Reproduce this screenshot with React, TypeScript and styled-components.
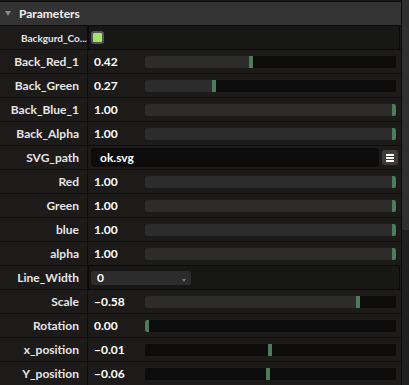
import React from "react";
import styled, { createGlobalStyle } from "styled-components";

const Global = createGlobalStyle`
  html, body { margin: 0; padding: 0; background: #1c1b1a; }
  body { font-family: Lato, "Open Sans", "Liberation Sans", sans-serif; }
`;

const Frame = styled.div`
  display: flex;
  width: 409px;
  height: 385px;
  overflow: hidden;
  background: #1c1b1a;
`;

const Panel = styled.div`
  flex: 1;
  display: flex;
  flex-direction: column;
  padding-top: 1px;
  min-width: 0;
`;

const Header = styled.div`
  height: 23px;
  flex: none;
  display: flex;
  align-items: center;
  gap: 8px;
  padding-left: 5px;
  background: #333333;
  border-top: 1px solid #0c0c0c;
  border-bottom: 1px solid #0c0c0c;
  color: #f2f2f2;
  font-weight: 700;
  font-size: 12px;
`;

const Caret = styled.span`
  width: 0;
  height: 0;
  border-left: 3.5px solid transparent;
  border-right: 3.5px solid transparent;
  border-top: 5px solid #8a8a8a;
`;

const Row = styled.div`
  flex: none;
  display: grid;
  grid-template-columns: 88px 1fr;
  height: 23px;
  border-bottom: 1px solid #0c0c0c;
`;

const Label = styled.div<{ $small?: boolean }>`
  border-right: 1px solid #0c0c0c;
  padding: 0 8px 0 ${(p) => (p.$small ? "21px" : "8px")};
  display: flex;
  align-items: center;
  justify-content: ${(p) => (p.$small ? "flex-start" : "flex-end")};
  color: #e6e6e6;
  font-weight: 700;
  font-size: ${(p) => (p.$small ? "10px" : "12px")};
  white-space: nowrap;
  overflow: hidden;
`;

const Cell = styled.div<{ $boxed?: boolean }>`
  display: flex;
  align-items: center;
  padding: 0 5px 0 3px;
  min-width: 0;
  ${(p) =>
    p.$boxed &&
    `background:#171716; border:1px solid #0a0a0a; border-top:none; border-bottom:none; margin-right:1px; padding-left:2px;`}
`;

const Value = styled.span`
  width: 51px;
  flex: none;
  padding-left: 3px;
  color: #ffffff;
  font-weight: 700;
  font-size: 12px;
`;

const Track = styled.div`
  position: relative;
  flex: 1;
  height: 12px;
  background: #0c0c0c;
  border-radius: 2px;
  overflow: hidden;
`;

const Fill = styled.div`
  position: absolute;
  top: 0;
  bottom: 0;
  background: #2c2c2c;
`;

const Handle = styled.div`
  position: absolute;
  top: 0;
  bottom: 0;
  width: 4px;
  background: #4d7a58;
`;

const Swatch = styled.div<{ $color: string }>`
  width: 9px;
  height: 9px;
  border: 2px solid #555555;
  border-radius: 3px;
  background: ${(p) => p.$color};
`;

const TextBox = styled.div`
  flex: 1;
  height: 19px;
  display: flex;
  align-items: center;
  padding-left: 9px;
  background: #0c0c0c;
  border-radius: 3px;
  color: #ffffff;
  font-weight: 700;
  font-size: 12px;
`;

const MenuButton = styled.div`
  width: 16px;
  height: 15px;
  margin-left: 3px;
  margin-right: -2px;
  display: flex;
  flex-direction: column;
  align-items: center;
  justify-content: center;
  gap: 1px;
  background: #3c3c3c;
  border-radius: 3px;
`;

const Bar = styled.span`
  width: 8px;
  height: 2px;
  background: #ffffff;
`;

const Select = styled.div`
  position: relative;
  width: 100px;
  height: 14px;
  display: flex;
  align-items: center;
  padding-left: 6px;
  box-sizing: border-box;
  background: #2c2c2c;
  border-radius: 3px;
  color: #ffffff;
  font-weight: 700;
  font-size: 12px;
`;

const SelectCaret = styled.span`
  position: absolute;
  right: 5px;
  top: 8px;
  width: 0;
  height: 0;
  border-left: 2px solid transparent;
  border-right: 2px solid transparent;
  border-top: 3px solid #7a7a7a;
`;

const Scrollbar = styled.div`
  width: 7px;
  flex: none;
  border-left: 1px solid #0c0c0c;
  background: #1f1f1f;
  display: flex;
  flex-direction: column;
`;

const Thumb = styled.div`
  height: 230px;
  background: #2f2f2f;
`;

type SliderRow = {
  kind: "slider";
  label: string;
  value: string;
  pos: number;
  bipolar?: boolean;
};
type RowDef =
  | SliderRow
  | { kind: "color"; label: string; color: string }
  | { kind: "text"; label: string; value: string }
  | { kind: "select"; label: string; value: string };

const rows: RowDef[] = [
  { kind: "color", label: "Backgurd_Co...", color: "#a2e468" },
  { kind: "slider", label: "Back_Red_1", value: "0.42", pos: 0.42 },
  { kind: "slider", label: "Back_Green", value: "0.27", pos: 0.27 },
  { kind: "slider", label: "Back_Blue_1", value: "1.00", pos: 1 },
  { kind: "slider", label: "Back_Alpha", value: "1.00", pos: 1 },
  { kind: "text", label: "SVG_path", value: "ok.svg" },
  { kind: "slider", label: "Red", value: "1.00", pos: 1 },
  { kind: "slider", label: "Green", value: "1.00", pos: 1 },
  { kind: "slider", label: "blue", value: "1.00", pos: 1 },
  { kind: "slider", label: "alpha", value: "1.00", pos: 1 },
  { kind: "select", label: "Line_Width", value: "0" },
  { kind: "slider", label: "Scale", value: "\u22120.58", pos: 0.855 },
  { kind: "slider", label: "Rotation", value: "0.00", pos: 0 },
  { kind: "slider", label: "x_position", value: "\u22120.01", pos: 0.498, bipolar: true },
  { kind: "slider", label: "Y_position", value: "\u22120.06", pos: 0.49, bipolar: true },
];

function Slider({ pos, bipolar }: { pos: number; bipolar?: boolean }) {
  const start = bipolar ? Math.min(pos, 0.5) : 0;
  const end = bipolar ? Math.max(pos, 0.5) : pos;
  return (
    <Track>
      <Fill style={{ left: `${start * 100}%`, width: `${(end - start) * 100}%` }} />
      <Handle style={{ left: `calc((100% - 4px) * ${pos})` }} />
    </Track>
  );
}

function renderCell(r: RowDef) {
  switch (r.kind) {
    case "color":
      return (
        <Cell $boxed>
          <Swatch $color={r.color} />
        </Cell>
      );
    case "text":
      return (
        <Cell>
          <TextBox>{r.value}</TextBox>
          <MenuButton>
            <Bar />
            <Bar />
            <Bar />
          </MenuButton>
        </Cell>
      );
    case "select":
      return (
        <Cell $boxed>
          <Select>
            {r.value}
            <SelectCaret />
          </Select>
        </Cell>
      );
    default:
      return (
        <Cell>
          <Value>{r.value}</Value>
          <Slider pos={r.pos} bipolar={r.bipolar} />
        </Cell>
      );
  }
}

export default function App() {
  return (
    <>
      <Global />
      <Frame>
        <Panel>
          <Header>
            <Caret />
            Parameters
          </Header>
          {rows.map((r) => (
            <Row key={r.label}>
              <Label $small={r.kind === "color"}>{r.label}</Label>
              {renderCell(r)}
            </Row>
          ))}
        </Panel>
        <Scrollbar>
          <Thumb />
        </Scrollbar>
      </Frame>
    </>
  );
}
